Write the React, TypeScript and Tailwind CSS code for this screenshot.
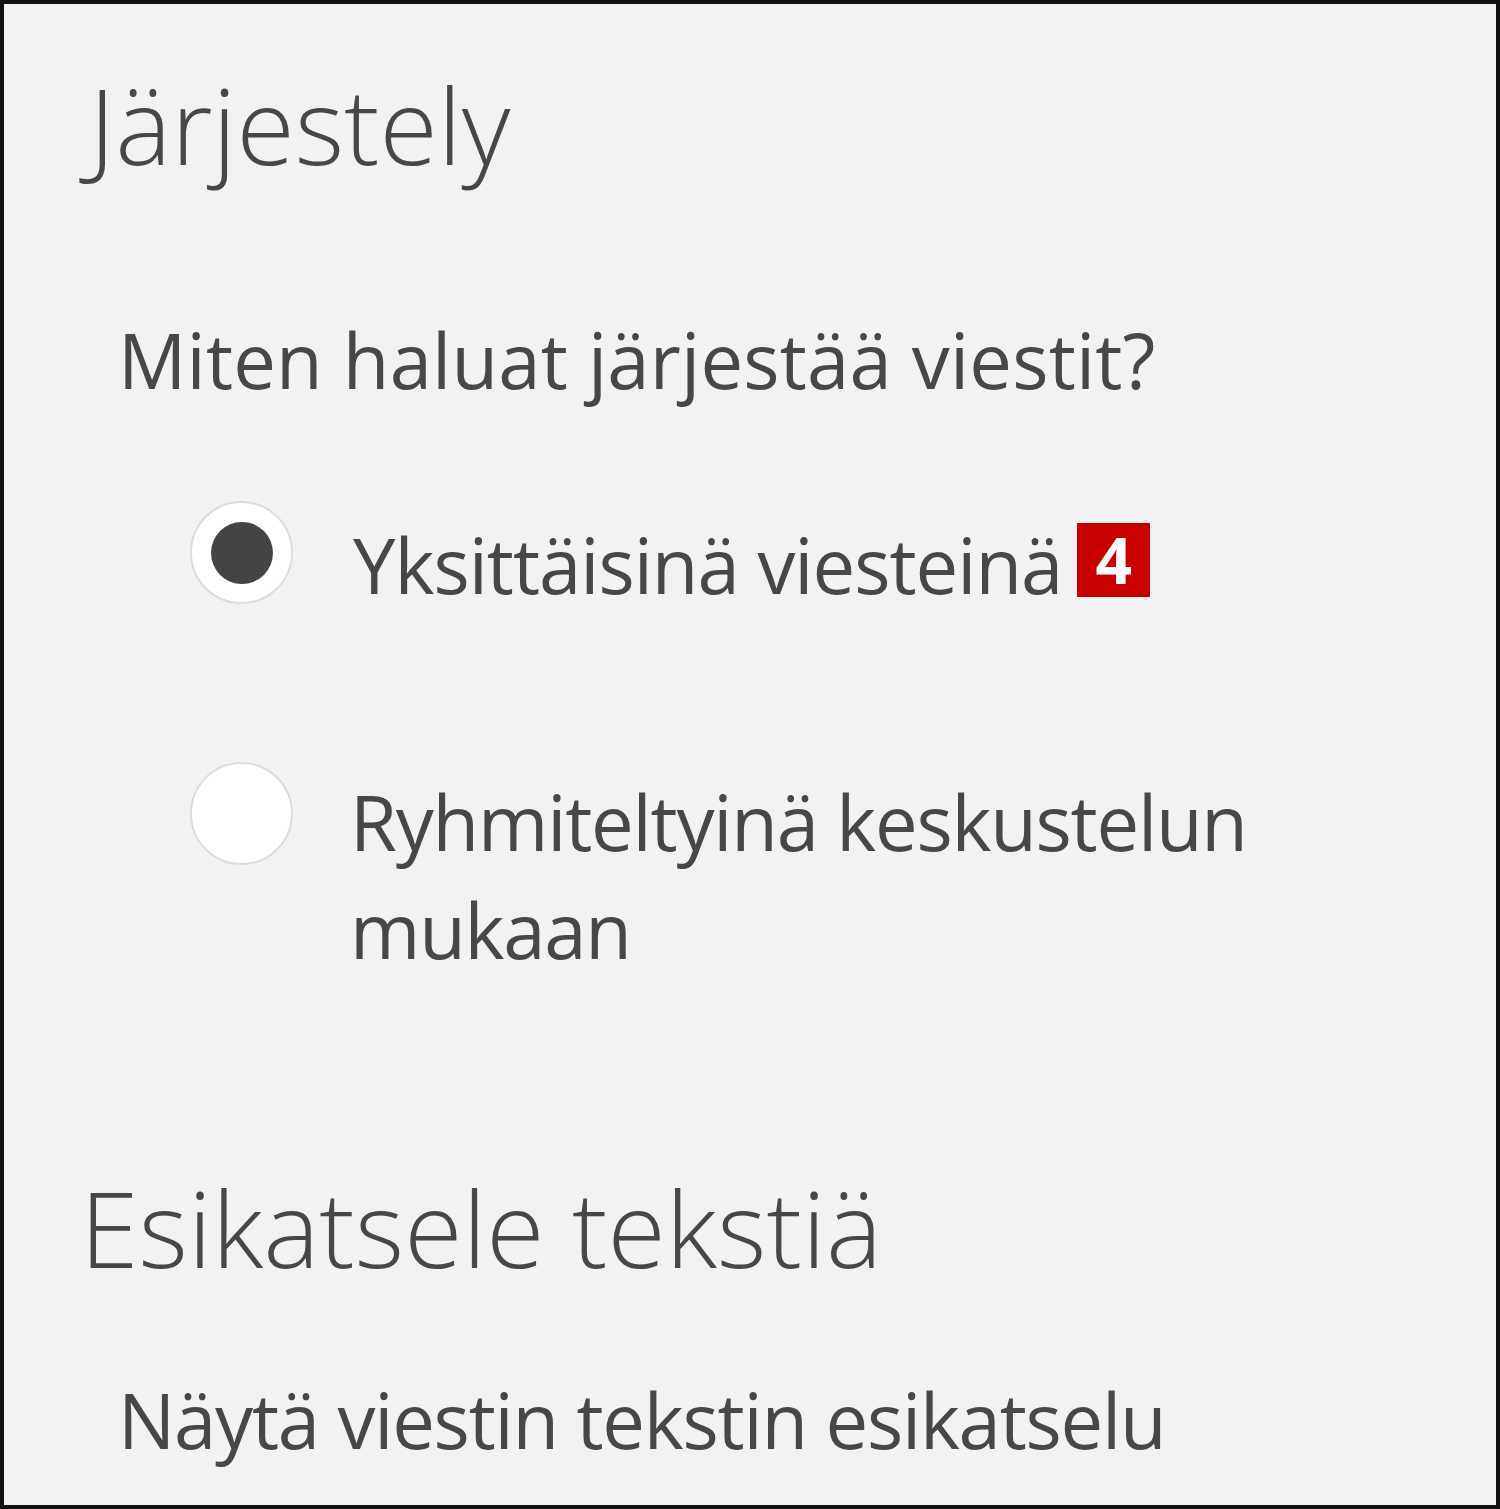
import React from "react";

function Radio({ checked, className }: { checked?: boolean; className?: string }) {
  return (
    <span
      className={`flex items-center justify-center shrink-0 w-[103px] h-[103px] rounded-full bg-white border-2 border-[#dcdcdc] ${className ?? ""}`}
    >
      {checked && <span className="block w-[62px] h-[62px] rounded-full bg-[#444444]" />}
    </span>
  );
}

export default function App() {
  return (
    <div
      className="w-[1500px] h-[1509px] bg-[#f2f2f2] border-4 border-[#111111] text-[#474747] overflow-hidden"
      style={{ fontFamily: '"Open Sans", "Noto Sans", sans-serif' }}
    >
      <div className="flex flex-col pl-[76px] pt-[60px]">
        {/* Arrangement */}
        <h2 className="ml-[9px] text-[106px] leading-[120px] font-light">Järjestely</h2>

        <div className="ml-[38px] mt-[122px] flex flex-col">
          <p className="text-[76px] leading-[108px] tracking-[0.2px]">Miten haluat järjestää viestit?</p>

          <div className="mt-[97px] flex items-start">
            <Radio checked className="ml-[72px] -mt-[10px]" />
            <div className="ml-[60px] flex items-end">
              <span className="text-[76px] leading-[108px] tracking-[-1px]">Yksittäisinä viesteinä</span>
              <span className="ml-[15px] mb-[22px] flex items-center justify-center w-[73px] h-[74px] bg-[#c80000] text-white text-[64px] leading-none font-bold">
                4
              </span>
            </div>
          </div>

          <div className="mt-[149px] flex items-start">
            <Radio className="ml-[72px] -mt-[6px]" />
            <span className="ml-[57px] w-[960px] text-[76px] leading-[108px] tracking-[-1.2px]">
              Ryhmiteltyinä keskustelun mukaan
            </span>
          </div>
        </div>

        {/* Preview text */}
        <h2 className="mt-[183px] text-[106px] leading-[120px] font-light">Esikatsele tekstiä</h2>

        <p className="ml-[38px] mt-[79px] text-[76px] leading-[108px] tracking-[-1.2px]">
          Näytä viestin tekstin esikatselu
        </p>
      </div>
    </div>
  );
}
